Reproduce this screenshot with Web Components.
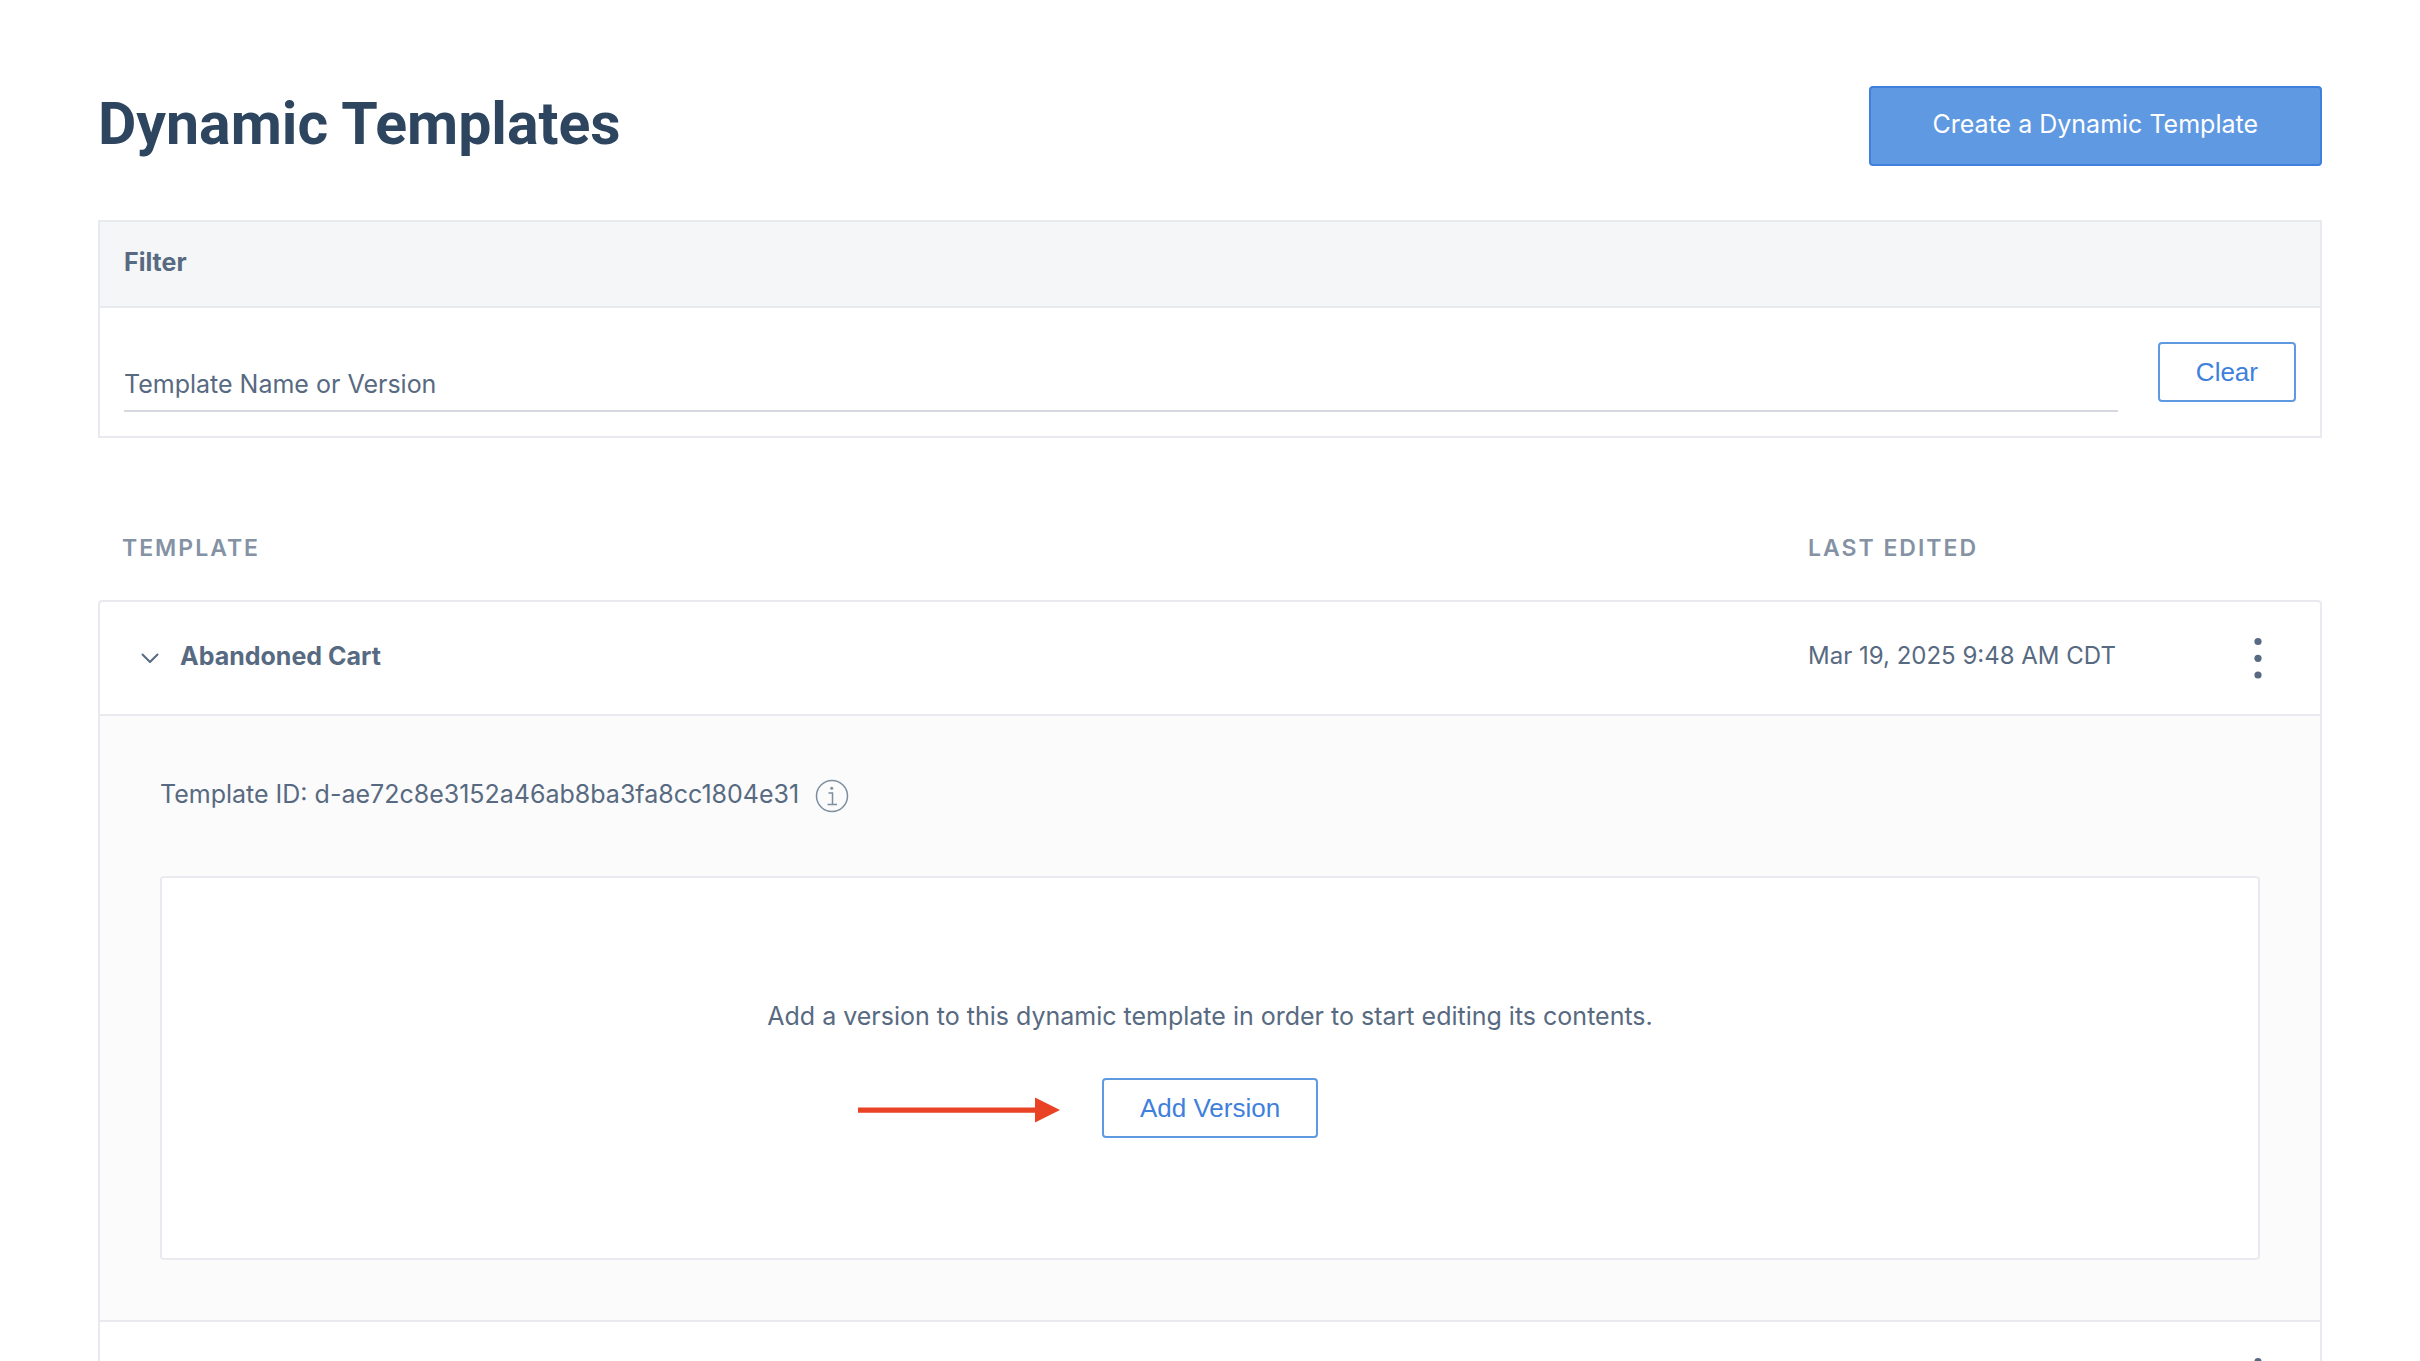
<!DOCTYPE html>
<html lang="en">
<head>
<meta charset="utf-8">
<title>Dynamic Templates</title>
<style>
  :root {
    --ink: #2e4560;
    --text: #576a81;
    --muted: #8492a4;
    --line: #e9eaef;
    --blue: #3e80dc;
    --blue-fill: #5f99e2;
  }
  body {
    margin: 0;
    height: 100vh;
    overflow: hidden;
    background: #fff;
    color: var(--text);
    font: 400 25px/40px Inter, "Liberation Sans", sans-serif;
  }
</style>
</head>
<body>
<templates-page></templates-page>

<script>
const define = (name, html) => customElements.define(name, class extends HTMLElement {
  constructor() {
    super();
    this.attachShadow({ mode: 'open' }).innerHTML = html;
  }
});

define('primary-button', `
  <style>
    :host { display: block; }
    button {
      display: block; box-sizing: border-box; height: 80px; padding: 0 62px 4px;
      border: 2px solid var(--blue); border-radius: 4px;
      background: var(--blue-fill); color: #fff; font: inherit; white-space: nowrap;
    }
  </style>
  <button type="button"><slot></slot></button>`);

define('outline-button', `
  <style>
    :host { display: block; }
    button {
      display: block; box-sizing: border-box; height: 60px; padding: 0 36px;
      border: 2px solid var(--blue-fill); border-radius: 4px;
      background: #fff; color: var(--blue);
      font: 400 26px/40px "Liberation Sans", Arial, sans-serif; white-space: nowrap;
    }
  </style>
  <button type="button"><slot></slot></button>`);

define('page-header', `
  <style>
    :host { display: flex; align-items: center; justify-content: space-between; }
    h1 { margin: 0; padding-bottom: 4px; color: var(--ink); font: 700 59px/72px Roboto, Inter, sans-serif; }
  </style>
  <h1><slot></slot></h1>
  <slot name="action"></slot>`);

define('filter-panel', `
  <style>
    :host { display: block; border: 2px solid var(--line); }
    h2 {
      margin: 0; padding: 20px 24px 24px; background: #f4f6f8; border-bottom: 2px solid var(--line);
      font-size: 25px; line-height: 40px; font-weight: 700;
    }
    form { display: flex; align-items: flex-start; gap: 40px; padding: 34px 24px 24px; }
    .field { flex: 1; display: grid; margin-top: 22px; padding-bottom: 6px; border-bottom: 2px solid #d5d9df; }
    label, input { grid-area: 1 / 1; font: inherit; }
    input { border: 0; padding: 0; margin: 0; background: transparent; color: inherit; outline: 0; width: 100%; }
    input:not(:placeholder-shown) { background: #fff; }
  </style>
  <h2>Filter</h2>
  <form>
    <div class="field">
      <label for="q">Template Name or Version</label>
      <input id="q" type="text" placeholder=" ">
    </div>
    <outline-button>Clear</outline-button>
  </form>`);

define('kebab-menu', `
  <style>
    :host { display: block; }
    button { display: block; margin: 0 auto; padding: 0; border: 0; background: none; color: inherit; }
    svg { display: block; }
  </style>
  <button type="button" aria-label="More actions">
    <svg width="32" height="48" viewBox="0 0 32 48" fill="currentColor">
      <circle cx="16" cy="7.5" r="3.6"/><circle cx="16" cy="24.3" r="3.6"/><circle cx="16" cy="41" r="3.6"/>
    </svg>
  </button>`);

define('info-icon', `
  <style>:host { display: block; padding-top: 4px; } svg { display: block; }</style>
  <svg width="34" height="34" viewBox="0 0 34 34" fill="none" stroke="#7d8da0" stroke-width="1.5">
    <circle cx="17" cy="17" r="15.5"/>
    <path d="M13.500 14h4v11.500M12.500 25.500h9.500"/>
    <circle cx="16.700" cy="9.200" r="1.500" fill="#7d8da0" stroke="none"/>
  </svg>`);

define('empty-versions', `
  <style>
    :host {
      display: flex; flex-direction: column; align-items: center; gap: 42px;
      padding: 118px 24px 120px; background: #fff; border: 2px solid var(--line); border-radius: 4px;
    }
    p { margin: 0; }
    .action { position: relative; }
    .pointer { position: absolute; right: calc(100% + 42px); top: 18px; }
  </style>
  <p><slot></slot></p>
  <div class="action">
    <svg class="pointer" width="202" height="28" viewBox="0 0 202 28" fill="#ea4224">
      <path d="M0 11.500h177V1.500L202 14l-25 12.500V16.800H0z"/>
    </svg>
    <slot name="action"></slot>
  </div>`);

define('template-table', `
  <style>
    :host { display: block; }
    table { width: 100%; border-spacing: 0; table-layout: fixed; }
    th, td { padding: 0; text-align: left; font-weight: 400; box-sizing: border-box; }
    .edited { width: 388px; }
    .menu { width: 126px; }
    thead th { color: var(--muted); font-size: 23px; line-height: 32px; font-weight: 600; letter-spacing: 2px; padding-bottom: 36px; }
    thead th:first-child { padding-left: 24px; }
    tbody th, tbody td { border-top: 2px solid var(--line); height: 114px; }
    tbody th { border-left: 2px solid var(--line); padding-left: 36px; font-weight: 700; }
    tbody td:last-child { border-right: 2px solid var(--line); }
    .row { display: flex; align-items: center; gap: 16px; }
    .row, .date { padding-bottom: 4px; }
    .date { font-size: 24px; }
    .toggle { padding: 4px 0 0; border: 0; background: none; color: inherit; }
    .toggle svg { display: block; }
    tbody tr:first-child th { border-top-left-radius: 4px; }
    tbody tr:first-child td:last-child { border-top-right-radius: 4px; }
    .detail td { border-left: 2px solid var(--line); background: #fbfbfb; padding: 58px 60px 60px; height: auto; }
    .id { display: flex; align-items: center; gap: 16px; height: 40px; margin-bottom: 62px; }
  </style>
  <table>
    <thead>
      <tr><th scope="col">TEMPLATE</th><th class="edited" scope="col">LAST EDITED</th><td class="menu"></td></tr>
    </thead>
    <tbody>
      <tr>
        <th scope="row"><div class="row">
          <button class="toggle" type="button" aria-label="Collapse" aria-expanded="true">
            <svg width="28" height="28" viewBox="0 0 28 28" fill="none" stroke="currentColor" stroke-width="2" stroke-linecap="round" stroke-linejoin="round"><path d="M6.500 10.500l7.500 7.500 7.500-7.500"/></svg>
          </button>
          <span>Abandoned Cart</span>
        </div></th>
        <td><div class="date">Mar 19, 2025 9:48 AM CDT</div></td>
        <td><kebab-menu></kebab-menu></td>
      </tr>
      <tr class="detail">
        <td colspan="3">
          <div class="id"><span>Template ID: d-ae72c8e3152a46ab8ba3fa8cc1804e31</span><info-icon></info-icon></div>
          <empty-versions>Add a version to this dynamic template in order to start editing its contents.
            <outline-button slot="action">Add Version</outline-button>
          </empty-versions>
        </td>
      </tr>
      <tr><th></th><td></td><td><kebab-menu></kebab-menu></td></tr>
    </tbody>
  </table>`);

define('templates-page', `
  <style>
    :host { display: block; padding: 86px 98px 0; }
    filter-panel { margin-top: 54px; }
    template-table { margin-top: 94px; }
  </style>
  <page-header>Dynamic Templates<primary-button slot="action">Create a Dynamic Template</primary-button></page-header>
  <filter-panel></filter-panel>
  <template-table></template-table>`);
</script>
</body>
</html>
